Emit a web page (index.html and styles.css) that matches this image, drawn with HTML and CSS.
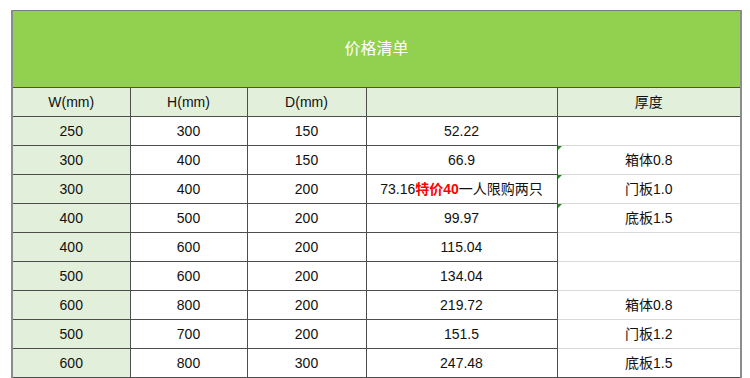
FILE: index.html
```html
<!DOCTYPE html>
<html lang="zh">
<head>
<meta charset="utf-8">
<title>价格清单</title>
<link rel="stylesheet" href="styles.css">
</head>
<body>
<div class="wrap">
<table class="sheet">
  <colgroup>
    <col class="c-w"><col class="c-h"><col class="c-d"><col class="c-p"><col class="c-t">
  </colgroup>
  <tr class="title-row"><td colspan="5">价格清单</td></tr>
  <tr class="head-row"><td>W(mm)</td><td>H(mm)</td><td>D(mm)</td><td></td><td class="thick top">厚度</td></tr>
  <tr><td class="w">250</td><td>300</td><td>150</td><td>52.22</td><td class="thick top"></td></tr>
  <tr><td class="w">300</td><td>400</td><td>150</td><td>66.9</td><td class="thick flag">箱体0.8</td></tr>
  <tr><td class="w">300</td><td>400</td><td>200</td><td>73.16<span class="deal">特价40</span>一人限购两只</td><td class="thick flag">门板1.0</td></tr>
  <tr><td class="w">400</td><td>500</td><td>200</td><td>99.97</td><td class="thick flag">底板1.5</td></tr>
  <tr><td class="w">400</td><td>600</td><td>200</td><td>115.04</td><td class="thick"></td></tr>
  <tr><td class="w">500</td><td>600</td><td>200</td><td>134.04</td><td class="thick"></td></tr>
  <tr><td class="w">600</td><td>800</td><td>200</td><td>219.72</td><td class="thick top">箱体0.8</td></tr>
  <tr><td class="w">500</td><td>700</td><td>200</td><td>151.5</td><td class="thick">门板1.2</td></tr>
  <tr><td class="w">600</td><td>800</td><td>300</td><td>247.48</td><td class="thick bottom">底板1.5</td></tr>
</table>
</div>
</body>
</html>
```
FILE: styles.css
```css
html, body {
  margin: 0;
  padding: 0;
  background: #ffffff;
}
.wrap {
  padding: 10px 10px 0 11px;
}
.sheet {
  border-collapse: collapse;
  table-layout: fixed;
  width: 729px;
  font-family: "Liberation Sans", "Noto Sans CJK SC", sans-serif;
  font-size: 14px;
  color: #111111;
  border-left: 2px solid #8c8c8c;
  border-right: 2px solid #8c8c8c;
}
.c-w { width: 118px; }
.c-h { width: 117px; }
.c-d { width: 119px; }
.c-p { width: 191px; }
.c-t { width: 184px; }
.sheet td {
  border: 1px solid #4d4d4d;
  height: 28px;
  padding: 0;
  text-align: center;
  vertical-align: middle;
  line-height: 16px;
  white-space: nowrap;
}
.title-row td {
  height: 76px;
  background: #92d050;
  color: #ffffff;
  font-size: 16px;
  border-top: 1px solid #7a7a7a;
}
.head-row td {
  background: #e2efda;
}
.sheet td.w {
  background: #e2efda;
}
.sheet td.thick {
  border-top-color: #d9d9d9;
  border-bottom-color: #d9d9d9;
  position: relative;
}
.sheet td.thick.top {
  border-top-color: #4d4d4d;
}
.sheet td.thick.bottom {
  border-bottom-color: #4d4d4d;
}
.head-row td.thick {
  border-bottom-color: #4d4d4d;
}
.sheet td.flag::before {
  content: "";
  position: absolute;
  left: 0;
  top: 0;
  border-top: 4px solid #1e8a1e;
  border-right: 4px solid transparent;
}
.deal {
  color: #ff0000;
  font-weight: bold;
}
```
